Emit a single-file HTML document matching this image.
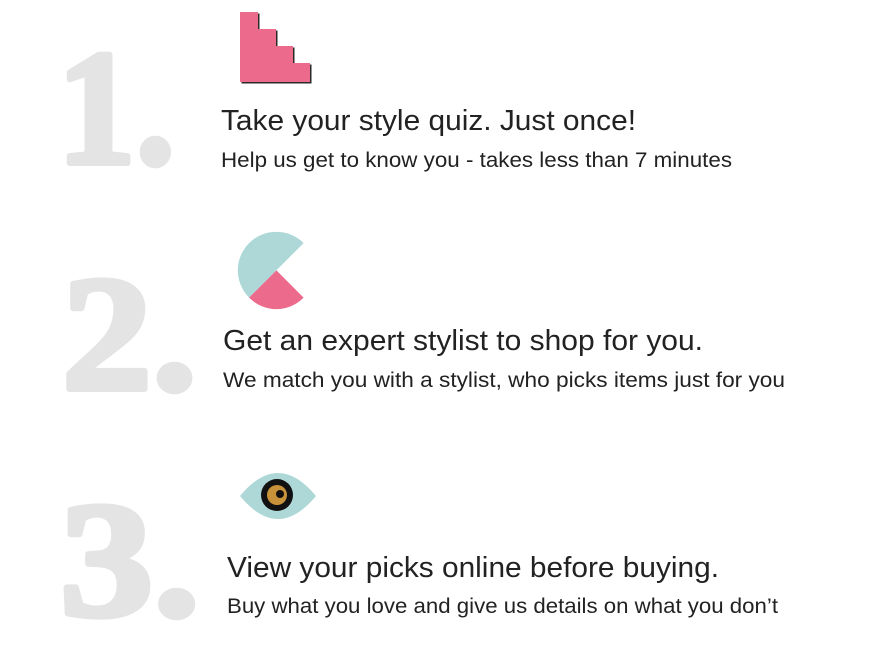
<!DOCTYPE html>
<html><head><meta charset="utf-8"><style>
html,body{margin:0;padding:0;background:#fff;width:887px;height:645px;overflow:hidden}
svg{display:block}
.num{font-family:"Liberation Serif",serif;font-weight:bold;fill:#e4e4e4;stroke:#e4e4e4;stroke-width:6;stroke-linejoin:round;font-size:164px}
.t{font-family:"Liberation Sans",sans-serif;fill:#222;font-size:29px}
.s{font-family:"Liberation Sans",sans-serif;fill:#222;font-size:21px}
</style></head><body>
<svg width="887" height="645" viewBox="0 0 887 645">
<text class="num" x="57" y="163" textLength="118" lengthAdjust="spacingAndGlyphs">1.</text>
<text class="num" x="62" y="389" textLength="135" lengthAdjust="spacingAndGlyphs">2.</text>
<text class="num" x="60" y="615" textLength="140" lengthAdjust="spacingAndGlyphs">3.</text>

<path d="M241.5 13.5 H259.5 V30.5 H277.5 V47.5 H294.5 V64.5 H311.5 V83.5 H241.5 Z" fill="#2a2a2a"/>
<path d="M240 12 H258 V29 H276 V46 H293 V63 H310 V82 H240 Z" fill="#ec6a8c"/>

<path d="M303.6 243.1 A38 38 0 0 0 249.1 297.6 Z" fill="#aed8d8"/>
<path d="M276.4 270.4 L249.1 297.6 A38 38 0 0 0 303.6 297.6 Z" fill="#ec6a8c"/>

<path d="M240 496 Q278 450 316 496 Q278 542 240 496 Z" fill="#aed8d8"/>
<circle cx="277" cy="495" r="16" fill="#111"/>
<circle cx="277" cy="495" r="10" fill="#c8923a"/>
<circle cx="280" cy="494" r="4" fill="#111"/>

<text class="t" x="221" y="130" textLength="415" lengthAdjust="spacingAndGlyphs">Take your style quiz. Just once!</text>
<text class="s" x="221" y="167" textLength="511" lengthAdjust="spacingAndGlyphs">Help us get to know you - takes less than 7 minutes</text>
<text class="t" x="223" y="350" textLength="480" lengthAdjust="spacingAndGlyphs">Get an expert stylist to shop for you.</text>
<text class="s" x="223" y="387" textLength="562" lengthAdjust="spacingAndGlyphs">We match you with a stylist, who picks items just for you</text>
<text class="t" x="227" y="577" textLength="492" lengthAdjust="spacingAndGlyphs">View your picks online before buying.</text>
<text class="s" x="227" y="613" textLength="551" lengthAdjust="spacingAndGlyphs">Buy what you love and give us details on what you don’t</text>
</svg>
</body></html>
